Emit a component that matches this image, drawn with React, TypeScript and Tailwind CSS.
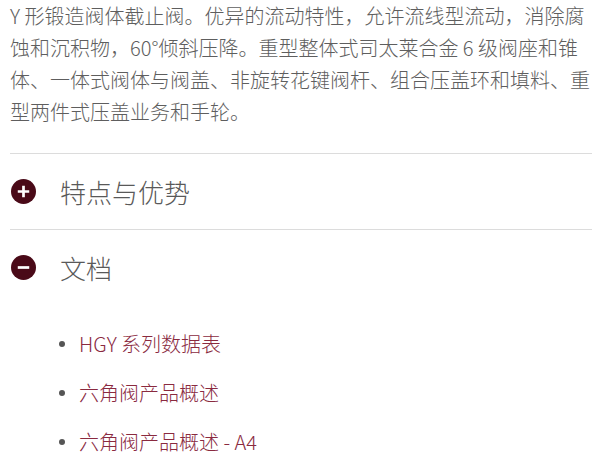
export default function App() {
  const docs = ["HGY 系列数据表", "六角阀产品概述", "六角阀产品概述 - A4"];

  return (
    <div
      className="w-[602px] h-[470px] overflow-hidden bg-white px-[10px] font-light"
      style={{ fontFamily: '"Noto Sans CJK SC", "Noto Sans", sans-serif' }}
    >
      <p className="text-[20px] leading-[32px] text-[#5e5e5e]">
        Y 形锻造阀体截止阀。优异的流动特性，允许流线型流动，消除腐蚀和沉积物，60°倾斜压降。重型整体式司太莱合金 6 级阀座和锥体、一体式阀体与阀盖、非旋转花键阀杆、组合压盖环和填料、重型两件式压盖业务和手轮。
      </p>

      <div className="mt-[25px] border-t border-[#dcdcdc]">
        <div className="flex h-[75px] items-center gap-[24px] pl-[1px]">
          <svg width="25" height="25" viewBox="0 0 24 24">
            <circle cx="12" cy="12" r="12" fill="#4a0a18" />
            <path d="M12 6.5v11M6.5 12h11" stroke="#fff" strokeWidth="2.6" />
          </svg>
          <span className="text-[26px] text-[#595959]">特点与优势</span>
        </div>
      </div>

      <div className="border-t border-[#dcdcdc]">
        <div className="flex h-[75px] items-center gap-[24px] pl-[1px]">
          <svg width="25" height="25" viewBox="0 0 24 24">
            <circle cx="12" cy="12" r="12" fill="#4a0a18" />
            <path d="M6.5 12h11" stroke="#fff" strokeWidth="2.6" />
          </svg>
          <span className="text-[26px] text-[#595959]">文档</span>
        </div>

        <ul className="mt-[14px] pl-[49px]">
          {docs.map((d) => (
            <li key={d} className="flex h-[49px] items-center gap-[14px]">
              <span className="h-[6px] w-[6px] rounded-full bg-[#555]" />
              <span className="text-[20px] text-[#8a2a3f]">{d}</span>
            </li>
          ))}
        </ul>
      </div>
    </div>
  );
}
